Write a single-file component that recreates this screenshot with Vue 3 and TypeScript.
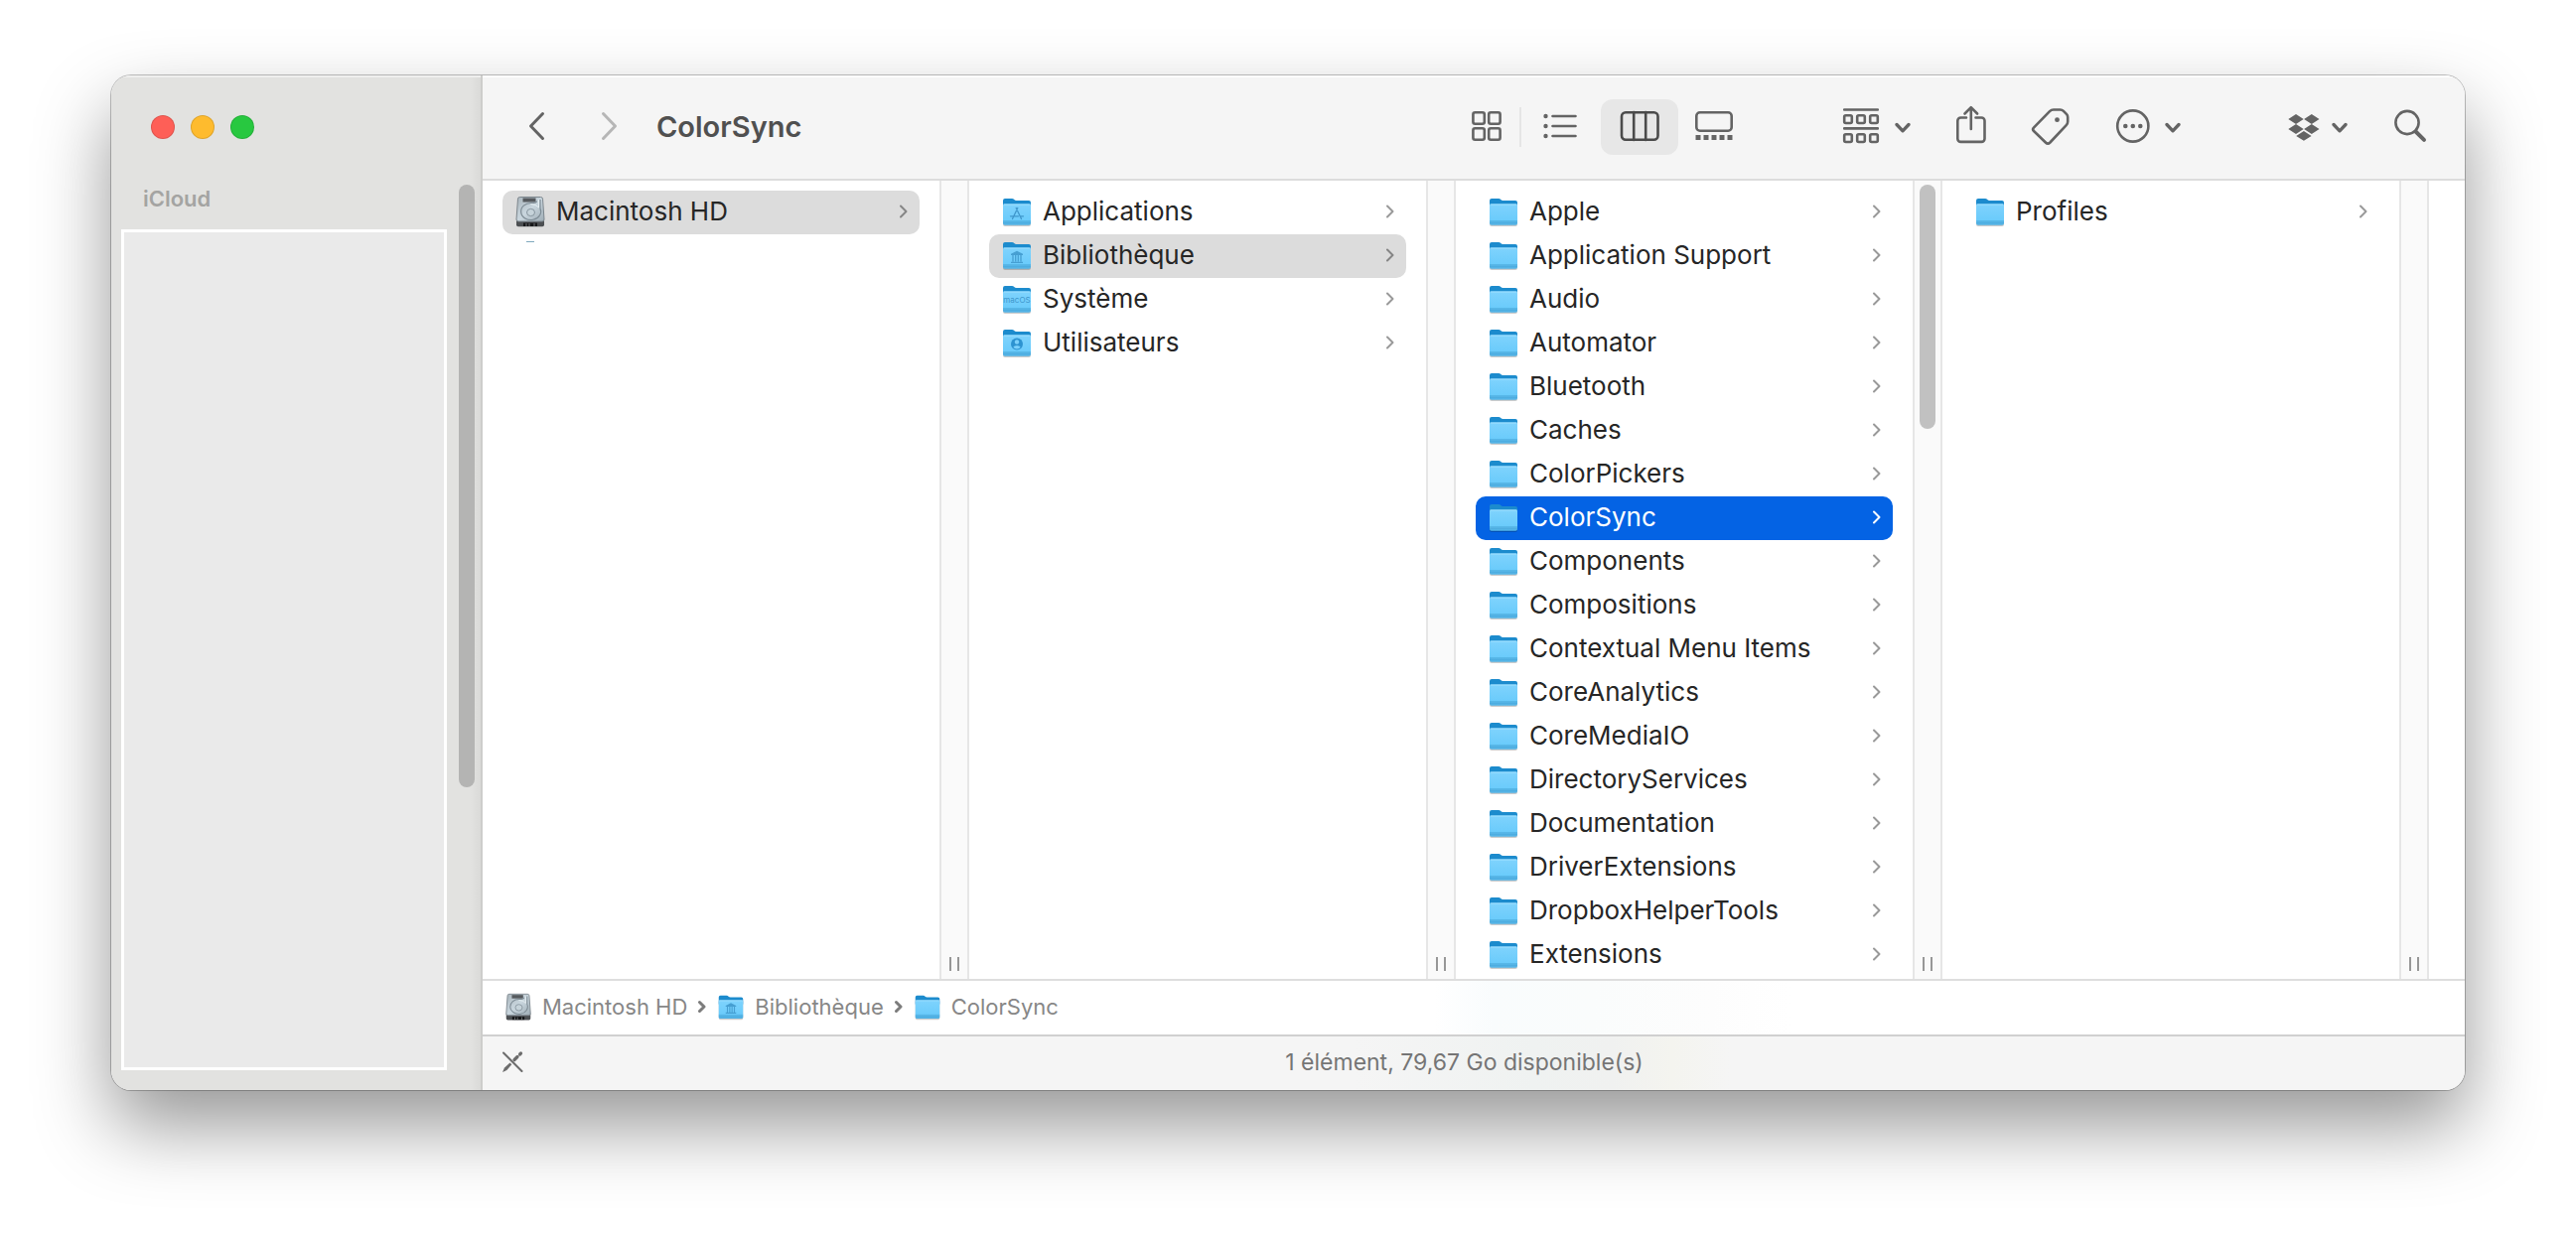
<script setup lang="ts">
import { ref } from 'vue'

interface Entry {
  name: string
  icon: 'disk' | 'folder'
  badge?: 'apps' | 'library' | 'macos' | 'user'
}

interface Column {
  entries: Entry[]
  selected?: string
  active?: boolean
  thumb?: number
  peek?: boolean
}

const folders = (...names: string[]): Entry[] => names.map((name) => ({ name, icon: 'folder' }))

const columns = ref<Column[]>([
  { entries: [{ name: 'Macintosh HD', icon: 'disk' }], selected: 'Macintosh HD', peek: true },
  {
    entries: [
      { name: 'Applications', icon: 'folder', badge: 'apps' },
      { name: 'Bibliothèque', icon: 'folder', badge: 'library' },
      { name: 'Système', icon: 'folder', badge: 'macos' },
      { name: 'Utilisateurs', icon: 'folder', badge: 'user' },
    ],
    selected: 'Bibliothèque',
  },
  {
    entries: folders(
      'Apple', 'Application Support', 'Audio', 'Automator', 'Bluetooth', 'Caches',
      'ColorPickers', 'ColorSync', 'Components', 'Compositions', 'Contextual Menu Items',
      'CoreAnalytics', 'CoreMediaIO', 'DirectoryServices', 'Documentation',
      'DriverExtensions', 'DropboxHelperTools', 'Extensions',
    ),
    selected: 'ColorSync',
    active: true,
    thumb: 31,
  },
  { entries: folders('Profiles') },
])

const path: Entry[] = [
  { name: 'Macintosh HD', icon: 'disk' },
  { name: 'Bibliothèque', icon: 'folder', badge: 'library' },
  { name: 'ColorSync', icon: 'folder' },
]

function select(column: Column, entry: Entry) {
  column.selected = entry.name
}
</script>

<template>
  <div class="desktop">
    <svg class="defs" aria-hidden="true">
      <defs>
        <linearGradient id="folder-front" x1="0" y1="0" x2="0" y2="1">
          <stop offset="0" stop-color="#7fd3fd" />
          <stop offset="0.8" stop-color="#6acbfb" />
          <stop offset="0.82" stop-color="#56b4e6" />
          <stop offset="1" stop-color="#52b3e6" />
        </linearGradient>
        <linearGradient id="disk-body" x1="0" y1="0" x2="1" y2="1">
          <stop offset="0" stop-color="#a9b4bb" />
          <stop offset="0.5" stop-color="#c9d6de" />
          <stop offset="1" stop-color="#9dabb4" />
        </linearGradient>
      </defs>
      <symbol id="folder" viewBox="0 0 32 32">
        <rect x="2" y="8" width="28" height="23" rx="2" fill="#000" opacity="0.2" />
        <path d="M2 5a2 2 0 0 1 2-2h7c2 0 2.500 2 4.500 2H28a2 2 0 0 1 2 2v6H2z" fill="#1c8bcd" />
        <path d="M2 10a1.500 1.500 0 0 1 1.500-1.500h25A1.500 1.500 0 0 1 30 10v18a1.800 1.800 0 0 1-1.800 1.800H3.800A1.800 1.800 0 0 1 2 28z" fill="url(#folder-front)" />
        <path d="M2.500 9h27" stroke="#a3e1ff" stroke-width="1" />
        <path d="M2 25.500h28M2 27.500h28" stroke="#49a9dc" stroke-width="0.600" />
      </symbol>
      <symbol id="disk" viewBox="0 0 32 32">
        <path d="M2 24v5.500a1.800 1.800 0 0 0 1.800 1.800h24.400a1.800 1.800 0 0 0 1.800-1.800V24z" fill="#4c4f52" />
        <path d="M5.500 1.500h21a2 2 0 0 1 2 1.700L30 24a2 2 0 0 1-2 2H4a2 2 0 0 1-2-2L3.500 3.200a2 2 0 0 1 2-1.700z" fill="url(#disk-body)" stroke="#7c868d" stroke-width="1" />
        <rect x="8.500" y="2.500" width="13" height="4" fill="#55595d" />
        <path d="M26 4v9a10 8.500 0 1 1-9-5.500c3 0 5.500-.5 5.500-2" fill="none" stroke="#7e8c95" stroke-width="1.200" />
        <path d="M24.500 4v8a10 8.500 0 0 0-8-3.500" fill="none" stroke="#eef5f8" stroke-width="0.800" />
        <ellipse cx="16.500" cy="17" rx="4" ry="3.600" fill="#c6d3da" stroke="#87959e" stroke-width="1" />
        <path d="M9 27.500h14v3.500H9z" fill="#161719" />
        <path d="M12 28v3M15 28v3M20 28v3" stroke="#85898c" stroke-width="0.800" />
      </symbol>
      <symbol id="badge-apps" viewBox="0 0 32 32">
        <path d="M16.800 12.500L11.500 23.500M15.200 12.500L20.500 23.500M9.500 20.800h8M19.500 20.800h3" fill="none" stroke="#3f97cc" stroke-width="1.300" stroke-linecap="round" />
      </symbol>
      <symbol id="badge-library" viewBox="0 0 32 32">
        <path d="M10 16v-1.200l6-3 6 3v1.200z" fill="#469fd2" />
        <path d="M12 16v6.500M14.700 16v6.500M17.300 16v6.500M20 16v6.500M10 23.300h12" stroke="#469fd2" stroke-width="1.300" />
      </symbol>
      <symbol id="badge-user" viewBox="0 0 32 32">
        <circle cx="16" cy="17.500" r="6" fill="#2d93d1" />
        <circle cx="16" cy="15.500" r="2.200" fill="#7bd0fb" />
        <path d="M12.300 20.800a4 3 0 0 1 7.400 0a5 5 0 0 1-7.400 0z" fill="#7bd0fb" />
      </symbol>
      <symbol id="chevron-down" viewBox="0 0 16 40">
        <path d="M2 17.500l6 6.300 6-6.300" fill="none" stroke="currentColor" stroke-width="3.300" stroke-linecap="round" stroke-linejoin="round" />
      </symbol>
    </svg>

    <main class="window">
      <aside class="sidebar">
        <div class="lights">
          <button class="light close" aria-label="Fermer"></button>
          <button class="light minimise" aria-label="Réduire"></button>
          <button class="light zoom" aria-label="Agrandir"></button>
        </div>
        <div class="sidebar-body">
          <div class="sidebar-list">
            <h2 class="sidebar-title">iCloud</h2>
            <div class="sidebar-panel"></div>
          </div>
          <div class="sidebar-scroll"><div class="thumb"></div></div>
        </div>
      </aside>

      <section class="main">
        <header class="toolbar">
          <nav class="history">
            <button class="tool" aria-label="Précédent">
              <svg width="17" height="40" viewBox="0 0 17 40"><path d="M14.500 6.500L2.500 19l12 12.500" class="line" /></svg>
            </button>
            <button class="tool disabled" aria-label="Suivant">
              <svg width="17" height="40" viewBox="0 0 17 40"><path d="M2.500 6.500l12 12.500-12 12.500" class="line" /></svg>
            </button>
          </nav>
          <h1 class="title">ColorSync</h1>

          <div class="views">
            <button class="tool view first" aria-label="Icônes">
              <svg width="30" height="40" viewBox="0 0 30 40" class="line">
                <rect x="1.400" y="5.200" width="11.400" height="11.600" rx="2" />
                <rect x="17.200" y="5.200" width="11.400" height="11.600" rx="2" />
                <rect x="1.400" y="21.200" width="11.400" height="11.600" rx="2" />
                <rect x="17.200" y="21.200" width="11.400" height="11.600" rx="2" />
              </svg>
            </button>
            <span class="divider"></span>
            <button class="tool view" aria-label="Liste">
              <svg width="34" height="40" viewBox="0 0 34 40">
                <path d="M9.500 9h23M9.500 19h23M9.500 29h23" class="line" />
                <g fill="currentColor"><circle cx="2.500" cy="9" r="2.200" /><circle cx="2.500" cy="19" r="2.200" /><circle cx="2.500" cy="29" r="2.200" /></g>
              </svg>
            </button>
            <button class="tool view current" aria-label="Colonnes" aria-pressed="true">
              <svg width="40" height="40" viewBox="0 0 40 40" class="line">
                <rect x="2" y="5.200" width="36.500" height="27.600" rx="4" />
                <path d="M14.200 5v28M26.200 5v28" />
              </svg>
            </button>
            <button class="tool view last" aria-label="Galerie">
              <svg width="38" height="40" viewBox="0 0 38 40">
                <rect x="1.300" y="5.300" width="35.400" height="18.400" rx="3.500" class="line" />
                <path d="M.5 28h5v5h-5zM8.500 28h5v5h-5zM16.500 28h5v5h-5zM24.500 28h5v5h-5zM32.500 28h5v5h-5z" fill="currentColor" />
              </svg>
            </button>
          </div>

          <div class="actions">
            <button class="tool menu" aria-label="Grouper">
              <svg width="36" height="40" viewBox="0 0 36 40" class="line">
                <path d="M1.200 2.500h33.600M1.200 21.400h33.600" />
                <rect x="1.200" y="8.200" width="7.600" height="7.800" rx="1.500" />
                <rect x="14.200" y="8.200" width="7.600" height="7.800" rx="1.500" />
                <rect x="27.200" y="8.200" width="7.600" height="7.800" rx="1.500" />
                <rect x="1.200" y="27.200" width="7.600" height="7.800" rx="1.500" />
                <rect x="14.200" y="27.200" width="7.600" height="7.800" rx="1.500" />
                <rect x="27.200" y="27.200" width="7.600" height="7.800" rx="1.500" />
              </svg>
              <svg width="16" height="40"><use href="#chevron-down" /></svg>
            </button>
            <button class="tool" aria-label="Partager">
              <svg width="30" height="40" viewBox="0 0 30 40" class="line">
                <path d="M10 10.500H4.500a3.200 3.200 0 0 0-3.200 3.200v18a3.200 3.200 0 0 0 3.200 3.200h20.800a3.200 3.200 0 0 0 3.200-3.200v-18a3.200 3.200 0 0 0-3.200-3.200H19.500M14.800 22V.5M8.500 6.500l6.300-6.300 6.300 6.300" />
              </svg>
            </button>
            <button class="tool" aria-label="Tags">
              <svg width="38" height="40" viewBox="1 0 38 40">
                <path d="M1.900 20.600L18 4.200c1.200-1.200 2.200-1.700 3.800-1.700h6.800c1.400 0 2.400.4 3.300 1.300l3 3c.9.900 1.300 1.900 1.300 3.200v4.500c0 1.500-.4 2.500-1.500 3.600L18.400 35.500c-1.500 1.500-3 1.500-4.500 0L2 24c-1.200-1.200-1.200-2.300-.1-3.400z" class="line" transform="translate(1 0)" />
                <circle cx="26.500" cy="12.700" r="2.400" fill="currentColor" />
              </svg>
            </button>
            <button class="tool menu" aria-label="Plus">
              <svg width="34" height="40" viewBox="0 0 34 40">
                <circle cx="17.800" cy="19" r="15.600" class="line" />
                <g fill="currentColor"><circle cx="10.300" cy="19" r="2.300" /><circle cx="17.800" cy="19" r="2.300" /><circle cx="25.300" cy="19" r="2.300" /></g>
              </svg>
              <svg width="16" height="40"><use href="#chevron-down" /></svg>
            </button>
          </div>

          <div class="extras">
            <button class="tool menu tight" aria-label="Dropbox">
              <svg width="32" height="40" viewBox="0 0 32 40">
                <path d="M8 7l7.700 5L8 17 .3 12zM23.800 7l7.700 5-7.700 5-7.700-5zM8 17l7.700 5L8 27 .3 22zM23.800 17l7.700 5-7.700 5-7.700-5zM15.900 24l7.700 4.900-7.700 4.900-7.700-4.900z" fill="currentColor" />
              </svg>
              <svg width="16" height="40"><use href="#chevron-down" /></svg>
            </button>
            <button class="tool" aria-label="Rechercher">
              <svg width="32" height="40" viewBox="0 0 32 40">
                <circle cx="13" cy="15.500" r="11.600" class="line" />
                <path d="M21.600 24.500l8.400 8.300" fill="none" stroke="currentColor" stroke-width="4" stroke-linecap="round" />
              </svg>
            </button>
          </div>
        </header>

        <div class="columns">
          <template v-for="(column, index) in columns" :key="index">
            <ul class="column">
              <li v-for="entry in column.entries" :key="entry.name">
                <button
                  class="row"
                  :class="{ selected: column.selected === entry.name, active: column.active && column.selected === entry.name }"
                  @click="select(column, entry)"
                >
                  <svg class="file-icon" viewBox="0 0 32 32" aria-hidden="true">
                    <use :href="'#' + entry.icon" />
                    <text v-if="entry.badge === 'macos'" x="16" y="20" text-anchor="middle" class="badge-text">macOS</text>
                    <use v-else-if="entry.badge" :href="'#badge-' + entry.badge" />
                  </svg>
                  <span class="name">{{ entry.name }}</span>
                  <svg class="arrow" width="8" height="14" viewBox="0 0 8 14" aria-hidden="true"><path d="M1 1.500L6.500 7 1 12.500" /></svg>
                </button>
              </li>
              <li v-if="column.peek" class="peek"></li>
            </ul>
            <div class="gutter">
              <div v-if="column.thumb" class="thumb" :style="{ height: column.thumb + '%' }"></div>
              <span class="grip"></span>
            </div>
          </template>
        </div>

        <nav class="path">
          <template v-for="(crumb, index) in path" :key="crumb.name">
            <svg v-if="index" class="separator" width="8" height="14" viewBox="0 0 8 14" aria-hidden="true"><path d="M1.500 2.500L6 7l-4.500 4.500" /></svg>
            <a class="crumb" href="#">
              <svg class="crumb-icon" viewBox="0 0 32 32" aria-hidden="true">
                <use :href="'#' + crumb.icon" />
                <use v-if="crumb.badge" :href="'#badge-' + crumb.badge" />
              </svg>
              <span>{{ crumb.name }}</span>
            </a>
          </template>
        </nav>

        <footer class="status">
          <svg width="22" height="22" viewBox="0 0 22 22" aria-hidden="true">
            <path d="M2 1.500L20.500 20" stroke="#6c6c6c" stroke-width="2" stroke-linecap="round" />
            <path d="M1 21l2-4.500 5.500-5 1.800 1.800-5 5.700z" fill="#6c6c6c" />
            <path d="M13 8.500l3-3M18.500 3l1-1" stroke="#6c6c6c" stroke-width="3.200" stroke-linecap="round" />
          </svg>
          <span class="summary">1 élément, 79,67 Go disponible(s)</span>
        </footer>
      </section>
    </main>
  </div>
</template>

<style>
body {
  background: #fff;
}
</style>

<style scoped>
.desktop {
  padding: 76px 112px 148px;
  font-family: Inter, "Liberation Sans", sans-serif;
  overflow: hidden;
}

.defs {
  position: absolute;
  width: 0;
  height: 0;
}

button {
  margin: 0;
  padding: 0;
  border: 0;
  background: none;
  font: inherit;
  color: inherit;
}

h1,
h2,
ul {
  margin: 0;
  padding: 0;
  list-style: none;
}

svg {
  display: block;
  flex: none;
  overflow: visible;
}

.window {
  display: flex;
  border-radius: 20px;
  overflow: hidden;
  background: #fff;
  box-shadow: 0 0 0 1px rgba(0, 0, 0, 0.24), 0 36px 76px rgba(0, 0, 0, 0.41);
}

.sidebar {
  box-sizing: border-box;
  flex: none;
  width: 374px;
  display: flex;
  flex-direction: column;
  border-right: 2px solid #cdcdcb;
  background: linear-gradient(to left, #dadad8, #e2e2e0 10px);
  box-shadow: inset 0 2px 0 #efefee;
}

.lights {
  display: flex;
  gap: 16px;
  padding: 40px 40px 42px;
}

.light {
  box-sizing: border-box;
  width: 24px;
  height: 24px;
  border: 1px solid rgba(0, 0, 0, 0.12);
  border-radius: 50%;
}

.close {
  background: #fe5f57;
}

.minimise {
  background: #febb2e;
}

.zoom {
  background: #28c840;
}

.sidebar-body {
  flex: 1;
  display: flex;
  padding: 4px 6px 20px 10px;
}

.sidebar-list {
  flex: 1;
  display: flex;
  flex-direction: column;
}

.sidebar-title {
  padding: 0 22px;
  margin-bottom: 17px;
  font-size: 22px;
  font-weight: 600;
  line-height: 28px;
  color: #a4a4a2;
}

.sidebar-panel {
  flex: 1;
  border: 3px solid #fff;
  background: #eaeaea;
}

.sidebar-scroll {
  width: 16px;
  margin-left: 12px;
}

.thumb {
  width: 16px;
  border-radius: 8px;
  background: #c1c1c1;
}

.sidebar-scroll .thumb {
  height: 68%;
  background: #b4b4b3;
}

.main {
  flex: 1;
  min-width: 0;
  display: flex;
  flex-direction: column;
}

.toolbar {
  display: flex;
  align-items: center;
  height: 104px;
  padding: 0 39px 0 46px;
  border-bottom: 2px solid #dcdcdc;
  background: #f5f5f5;
  box-shadow: inset 0 2px 0 #fff;
  color: #646464;
}

.tool {
  display: flex;
  align-items: center;
  justify-content: center;
}

.line {
  fill: none;
  stroke: currentColor;
  stroke-width: 2.6px;
  stroke-linecap: round;
  stroke-linejoin: round;
}

.history {
  display: flex;
  gap: 56px;
}

.history .line {
  stroke-width: 3px;
}

.disabled {
  color: #b6b6b6;
}

.title {
  flex: 1;
  margin-left: 39px;
  font-size: 29px;
  font-weight: 600;
  line-height: 36px;
  color: #505050;
}

.views {
  display: flex;
  align-items: center;
}

.view {
  width: 78px;
  height: 56px;
  border-radius: 12px;
}

.view.first {
  width: 66px;
}

.view.last {
  width: 72px;
}

.view.current {
  margin-left: 2px;
  background: #e7e7e7;
  color: #4b4b4b;
}

.divider {
  width: 2px;
  height: 40px;
  background: #e5e5e5;
}

.actions {
  display: flex;
  gap: 46px;
  margin-left: 94px;
}

.extras {
  display: flex;
  gap: 47px;
  margin-left: 108px;
}

.menu {
  gap: 16px;
}

.menu.tight {
  gap: 12px;
}

.columns {
  display: flex;
  overflow: hidden;
  border-bottom: 2px solid #dedede;
}

.column {
  box-sizing: border-box;
  flex: none;
  width: 460px;
  padding: 10px 20px 2px;
}

.row {
  box-sizing: border-box;
  display: flex;
  align-items: center;
  gap: 10px;
  width: 100%;
  height: 44px;
  padding: 0 12px 2px;
  border-radius: 10px;
  font-size: 26px;
  line-height: 32px;
  text-align: left;
  color: #262626;
}

.file-icon {
  width: 32px;
  height: 32px;
}

.badge-text {
  font-size: 8px;
  fill: #3f97cc;
}

.name {
  flex: 1;
  white-space: nowrap;
}

.arrow path,
.separator path {
  fill: none;
  stroke: #999;
  stroke-width: 2px;
  stroke-linecap: round;
  stroke-linejoin: round;
}

.selected {
  background: #dcdcdc;
}

.selected .arrow path {
  stroke: #858585;
}

.active {
  background: #0463e4;
  color: #fff;
}

.active .arrow path {
  stroke: #fff;
}

.peek {
  width: 8px;
  height: 1px;
  margin: 7px 0 0 24px;
  background: #7fa9bd;
}

.gutter {
  box-sizing: border-box;
  flex: none;
  display: flex;
  flex-direction: column;
  align-items: center;
  width: 30px;
  padding: 4px 0 8px;
  border: solid #e6e6e6;
  border-width: 0 2px;
  background: #fafafa;
}

.grip {
  box-sizing: border-box;
  width: 10px;
  height: 14px;
  margin-top: auto;
  border: solid #979797;
  border-width: 0 2px;
}

.path {
  display: flex;
  align-items: center;
  gap: 11px;
  height: 52px;
  padding: 0 22px 2px;
  border-bottom: 2px solid #d0d0d0;
  background: linear-gradient(to right, #fff 48%, #f9fcfd 51%, #fafcfc 56%, #fdfdfd 62%, #fff 66%);
  font-size: 22px;
  line-height: 28px;
  color: #878787;
}

.crumb {
  display: flex;
  align-items: center;
  gap: 10px;
  color: inherit;
  text-decoration: none;
}

.crumb-icon {
  width: 28px;
  height: 28px;
}

.separator path {
  stroke: #7c7c7c;
  stroke-width: 3px;
}

.status {
  display: flex;
  align-items: center;
  height: 52px;
  padding: 0 60px 2px 19px;
  background: linear-gradient(to right, #f5f5f5 44%, #eff2f1 53%, #f0f1f0 57%, #f4f4ef 60%, #f5f5f5 63%);
  font-size: 23px;
  line-height: 28px;
  color: #757575;
}

.summary {
  flex: 1;
  text-align: center;
}
</style>
